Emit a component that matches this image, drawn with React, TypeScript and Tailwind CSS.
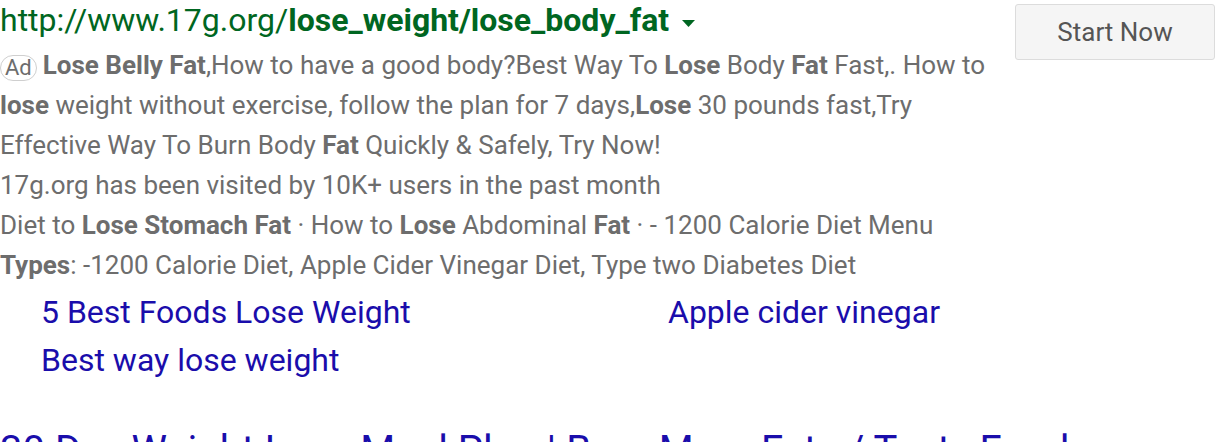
import React from "react";

export default function App() {
  return (
    <div className="w-[1216px] h-[442px] overflow-hidden bg-white font-['Roboto',_'Liberation_Sans',_sans-serif]">
      <div className="flex">
        <div className="flex-1">
          <div className="flex items-center text-[32px] leading-[40px] text-[#006621]">
            <span>http://www.17g.org/<b className="font-bold">lose_weight/lose_body_fat</b></span>
            <svg className="ml-[13px] mt-[6px]" width="13" height="7" viewBox="0 0 13 7">
              <path d="M0 0 L13 0 L6.5 7 Z" fill="#006621" />
            </svg>
          </div>
          <div className="mt-[5px] text-[26px] leading-[40px] text-[#6d6d6d]">
            <div>
              <span className="inline-block border border-[#cfcfcf] rounded-full px-[4px] h-[26px] leading-[24px] text-[22px] mr-[6px] align-[-1px]">Ad</span>
              <b>Lose Belly Fat</b>,How to have a good body?Best Way To <b>Lose</b> Body <b>Fat</b> Fast,. How to <b>lose</b> weight without exercise, follow the plan for 7 days,<b>Lose</b> 30 pounds fast,Try Effective Way To Burn Body <b>Fat</b> Quickly &amp; Safely, Try Now!
            </div>
            <div>17g.org has been visited by 10K+ users in the past month</div>
            <div>Diet to <b>Lose Stomach Fat</b> · How to <b>Lose</b> Abdominal <b>Fat</b> · - 1200 Calorie Diet Menu</div>
            <div><b>Types</b>: -1200 Calorie Diet, Apple Cider Vinegar Diet, Type two Diabetes Diet</div>
          </div>
        </div>
        <div className="w-[216px] shrink-0 flex justify-end pt-[4px] pr-[1px]">
          <button className="w-[200px] h-[56px] bg-[#f5f5f5] border border-[#dcdcdc] rounded-[3px] text-[26px] text-[#555]">Start Now</button>
        </div>
      </div>
      <div className="grid grid-cols-[627px_1fr] pl-[41px] mt-[3px] text-[32px] leading-[48px] text-[#1a0dab]">
        <div>5 Best Foods Lose Weight</div>
        <div>Apple cider vinegar</div>
        <div>Best way lose weight</div>
      </div>
      <div className="mt-[43px] text-[40px] leading-[48px] text-[#1a0dab] whitespace-nowrap">30 Day Weight Loss Meal Plan | Burn More Fats / Tasty Food</div>
    </div>
  );
}
